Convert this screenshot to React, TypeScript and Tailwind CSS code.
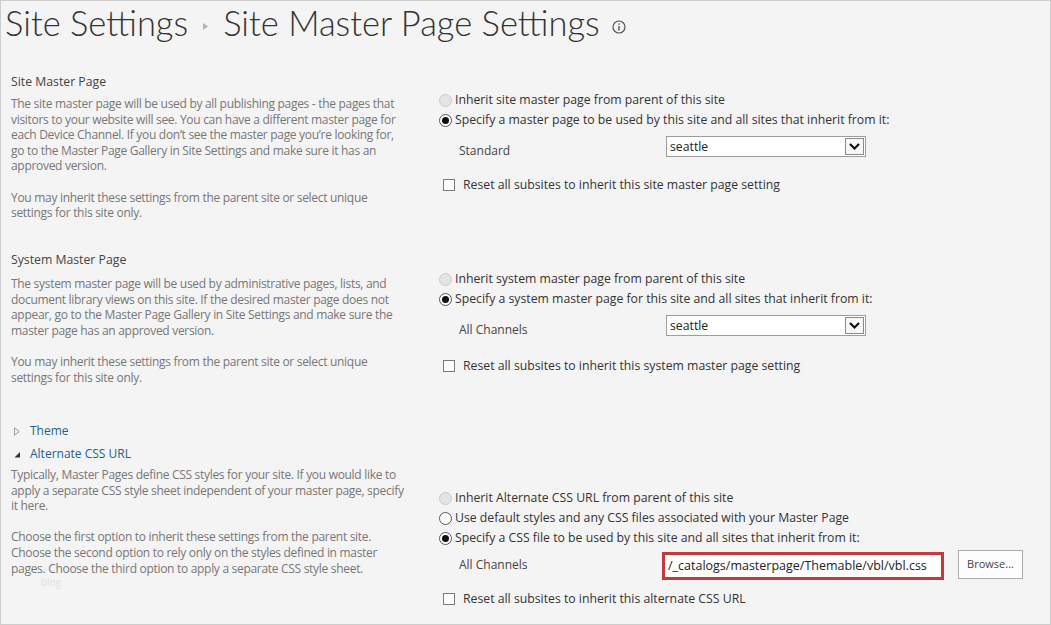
import React from "react";

const body = "font-['Open_Sans',sans-serif]";

function Radio({ state }: { state: "disabled" | "on" | "off" }) {
	if (state === "disabled")
		return <span className="inline-block w-[13px] h-[13px] rounded-full border border-[#c9c9c9] bg-[#e4e4e4]" />;
	return (
		<span className="inline-flex items-center justify-center w-[13px] h-[13px] rounded-full border border-[#555] bg-white">
			{state === "on" && <span className="w-[7px] h-[7px] rounded-full bg-[#111]" />}
		</span>
	);
}

function RadioRow({ state, children }: { state: "disabled" | "on" | "off"; children: React.ReactNode }) {
	return (
		<div className="h-[20px] flex items-center gap-[3px]">
			<Radio state={state} />
			<span className="text-[#333]">{children}</span>
		</div>
	);
}

function CheckRow({ children, className = "" }: { children: React.ReactNode; className?: string }) {
	return (
		<div className={`h-[16px] flex items-center pl-[4px] gap-[8px] ${className}`}>
			<span className="inline-block w-[12px] h-[12px] border border-[#7a7a7a] bg-white" />
			<span className="text-[#333]">{children}</span>
		</div>
	);
}

function Select({ value }: { value: string }) {
	return (
		<div className="w-[200px] h-[21px] border border-[#9d9d9d] bg-white flex items-stretch">
			<span className="flex-1 pl-[3px] leading-[19px] text-[#222]">{value}</span>
			<span className="w-[19px] bg-[#f7f7f7] flex items-center justify-center m-[1px] border border-[#8a8a8a]">
				<svg width="11" height="7" viewBox="0 0 11 7">
					<path d="M1 1l4.5 4.5L10 1" fill="none" stroke="#111" strokeWidth="2.2" />
				</svg>
			</span>
		</div>
	);
}

function Desc({ lines, className = "" }: { lines: string[]; className?: string }) {
	return (
		<div className={`leading-[15.6px] text-[12px] tracking-[-0.3px] text-[#777] ${className}`}>
			{lines.map((l, i) => (
				<div key={i} className="h-[15.6px] whitespace-nowrap">
					{l}
				</div>
			))}
		</div>
	);
}

function Section({
	title,
	lines,
	radios,
	label,
	value,
	reset,
	height,
	descGap,
	topPad,
	resetGap,
}: {
	title: string;
	lines: string[];
	radios: [string, "disabled" | "on" | "off"][];
	label: string;
	value: string;
	reset: string;
	height: string;
	descGap: string;
	topPad: string;
	resetGap: string;
}) {
	return (
		<div className={`grid grid-cols-[428px_1fr] ${height}`}>
			<div className="pl-[10px]">
				<div className="leading-4 text-[#444]">{title}</div>
				<Desc lines={lines} className={descGap} />
			</div>
			<div className={`pl-[10px] ${topPad}`}>
				{radios.map(([t, s]) => (
					<RadioRow key={t} state={s}>
						{t}
					</RadioRow>
				))}
				<div className="flex mt-[6px] pl-[20px]">
					<span className="w-[207px] leading-4 mt-[7px] text-[#444] text-[12px]">{label}</span>
					<Select value={value} />
				</div>
				<CheckRow className={resetGap}>{reset}</CheckRow>
			</div>
		</div>
	);
}

export default function App() {
	return (
		<div className={`w-[1051px] h-[625px] bg-[#f4f4f4] border border-[#cdcdcd] overflow-hidden text-[12.25px] ${body}`}>
			<header className="h-[73px]">
				<div className="flex items-center h-[44px] pl-[4px] font-['Lato',sans-serif] font-light text-[34.5px] text-[#333]">
					<span>Site Settings</span>
					<svg width="5" height="7" viewBox="0 0 5 7" className="mx-[15px] mt-[6px]">
						<path d="M0 0l5 3.5L0 7z" fill="#b5b5b5" />
					</svg>
					<span>Site Master Page Settings</span>
					<svg width="14" height="14" viewBox="0 0 14 14" className="ml-[12px] mt-[8px]">
						<circle cx="7" cy="7" r="6" fill="none" stroke="#555" strokeWidth="1.2" />
						<rect x="6.3" y="6" width="1.4" height="4.5" fill="#555" />
						<rect x="6.3" y="3.4" width="1.4" height="1.4" fill="#555" />
					</svg>
				</div>
			</header>

			<Section
				height="h-[178px]"
				descGap="mt-[6px]"
				topPad="pt-[16px]"
				resetGap="mt-[18px]"
				title="Site Master Page"
				lines={[
					"The site master page will be used by all publishing pages - the pages that",
					"visitors to your website will see. You can have a different master page for",
					"each Device Channel. If you don’t see the master page you’re looking for,",
					"go to the Master Page Gallery in Site Settings and make sure it has an",
					"approved version.",
					"",
					"You may inherit these settings from the parent site or select unique",
					"settings for this site only.",
				]}
				radios={[
					["Inherit site master page from parent of this site", "disabled"],
					["Specify a master page to be used by this site and all sites that inherit from it:", "on"],
				]}
				label="Standard"
				value="seattle"
				reset="Reset all subsites to inherit this site master page setting"
			/>

			<Section
				height="h-[171px]"
				descGap="mt-[8px]"
				topPad="pt-[17px]"
				resetGap="mt-[20px]"
				title="System Master Page"
				lines={[
					"The system master page will be used by administrative pages, lists, and",
					"document library views on this site. If the desired master page does not",
					"appear, go to the Master Page Gallery in Site Settings and make sure the",
					"master page has an approved version.",
					"",
					"You may inherit these settings from the parent site or select unique",
					"settings for this site only.",
				]}
				radios={[
					["Inherit system master page from parent of this site", "disabled"],
					["Specify a system master page for this site and all sites that inherit from it:", "on"],
				]}
				label="All Channels"
				value="seattle"
				reset="Reset all subsites to inherit this system master page setting"
			/>

			<div className="grid grid-cols-[428px_1fr]">
				<div className="pl-[10px]">
					<div className="flex items-center h-[16px] gap-[10px] pl-[3px]">
						<svg width="6" height="9" viewBox="0 0 6 9">
							<path d="M0.5 0.8L5.2 4.5L0.5 8.2z" fill="none" stroke="#9a9a9a" strokeWidth="1" />
						</svg>
						<span className="text-[#1e5f8c] text-[12px]">Theme</span>
					</div>
					<div className="flex items-center h-[16px] gap-[10px] pl-[3px] mt-[7px]">
						<svg width="6" height="9" viewBox="0 0 6 9">
							<path d="M6 2L6 7.5L0.5 7.5z" fill="#333" />
						</svg>
						<span className="text-[#1e5f8c] text-[12px]">Alternate CSS URL</span>
					</div>
					<Desc
						className="mt-[5px]"
						lines={[
							"Typically, Master Pages define CSS styles for your site. If you would like to",
							"apply a separate CSS style sheet independent of your master page, specify",
							"it here.",
							"",
							"Choose the first option to inherit these settings from the parent site.",
							"Choose the second option to rely only on the styles defined in master",
							"pages. Choose the third option to apply a separate CSS style sheet.",
						]}
					/>
					<div className="pl-[30px] text-[10px] text-[#e0e0e0] leading-3">blog</div>
				</div>
				<div className="pt-[65px] pl-[10px]">
					<RadioRow state="disabled">Inherit Alternate CSS URL from parent of this site</RadioRow>
					<RadioRow state="off">Use default styles and any CSS files associated with your Master Page</RadioRow>
					<RadioRow state="on">Specify a CSS file to be used by this site and all sites that inherit from it:</RadioRow>
					<div className="flex mt-[2px] pl-[20px]">
						<span className="w-[203px] leading-4 mt-[7px] text-[#444] text-[12px]">All Channels</span>
						<div className="w-[282px] h-[28px] mt-[2px] border-[3px] border-[#c23a3c] bg-white flex items-center pl-[3px] text-[#222] text-[12.5px]">
							/_catalogs/masterpage/Themable/vbl/vbl.css
						</div>
						<button className="ml-[14px] w-[65px] h-[29px] border border-[#ababab] bg-[#fdfdfd] text-[11px] text-[#444]">
							Browse...
						</button>
					</div>
					<CheckRow className="mt-[11px]">Reset all subsites to inherit this alternate CSS URL</CheckRow>
				</div>
			</div>
		</div>
	);
}
